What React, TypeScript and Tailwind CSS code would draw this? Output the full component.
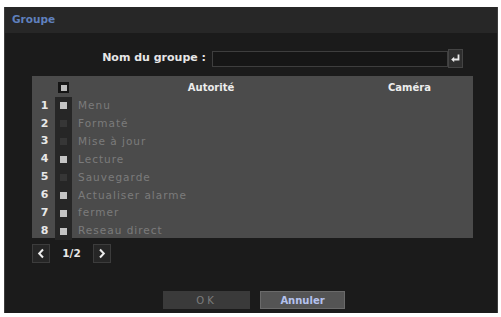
const font = { fontFamily: '"DejaVu Sans", Verdana, sans-serif' }

const rows = [
  { n: 1, label: 'Menu', on: true },
  { n: 2, label: 'Formaté', on: false },
  { n: 3, label: 'Mise à jour', on: false },
  { n: 4, label: 'Lecture', on: true },
  { n: 5, label: 'Sauvegarde', on: false },
  { n: 6, label: 'Actualiser alarme', on: true },
  { n: 7, label: 'fermer', on: true },
  { n: 8, label: 'Reseau direct', on: true },
]

const EnterIcon = () => (
  <svg width="11" height="11" viewBox="0 0 11 11">
    <path d="M8.5 1.5 V6.5 H3" stroke="#e8e8e8" strokeWidth="1.8" fill="none" />
    <path d="M1.2 6.5 L4.2 3.8 V9.2 Z" fill="#e8e8e8" />
  </svg>
)

const Chevron = ({ dir }: { dir: 'l' | 'r' }) => (
  <svg width="8" height="11" viewBox="0 0 8 11">
    <path
      d={dir === 'l' ? 'M6 1.5 L2.2 5.5 L6 9.5' : 'M2 1.5 L5.8 5.5 L2 9.5'}
      stroke="#ececec"
      strokeWidth="2"
      fill="none"
    />
  </svg>
)

export default function App() {
  return (
    <div className="w-[501px] h-[317px] bg-white pl-[4px] pt-[7px] overflow-hidden" style={font}>
      <div className="w-[494px] h-[306px] bg-[#1b1b1b] border-x border-[#3d3d3d] flex flex-col">
        {/* title */}
        <div className="h-[26px] bg-[#272727] flex items-center pl-[7px]">
          <span className="text-[10.5px] font-bold text-[#5f80bd]">Groupe</span>
        </div>

        {/* nom du groupe */}
        <div className="flex items-center mt-[16px] h-[19px]">
          <div className="w-[207px] text-right pr-[6px] text-[11px] font-bold text-[#e6e6e6]">Nom du groupe :</div>
          <div className="w-[236px] h-[16px] border border-[#3e3e3e] bg-[#161616]" />
          <div className="w-[15px] h-[19px] bg-[#2e2e2e] border border-[#444] flex items-center justify-center">
            <EnterIcon />
          </div>
        </div>

        {/* table */}
        <div className="ml-[27px] mt-[8px] w-[441px] h-[162px] bg-[#4b4b4b]">
          <div className="flex items-center h-[21px] pt-[2px]">
            <div className="w-[23px]" />
            <div className="w-[17px] flex justify-center">
              <div className="w-[11px] h-[11px] bg-[#151515] flex items-center justify-center">
                <div className="w-[6px] h-[6px] bg-[#bdbdbd]" />
              </div>
            </div>
            <div className="w-[278px] text-center text-[10px] font-bold text-[#ededed]">Autorité</div>
            <div className="ml-[38px] text-[10px] font-bold text-[#ededed]">Caméra</div>
          </div>
          <div className="flex flex-col">
            {rows.map((r) => (
              <div key={r.n} className="flex items-center h-[17.9px]">
                <div className="w-[23px] text-center text-[11px] font-bold text-[#e8e8e8] pl-[2px]">{r.n}</div>
                <div className="w-[17px] h-full bg-[#262626] flex items-center justify-center">
                  <div className={r.on ? 'w-[7px] h-[7px] bg-[#c4c4c4]' : 'w-[7px] h-[7px] bg-[#363636]'} />
                </div>
                <div className="pl-[6px] text-[10.5px] tracking-[1px] text-[#7b7b7b]">{r.label}</div>
              </div>
            ))}
          </div>
        </div>

        {/* pagination */}
        <div className="flex items-center ml-[27px] mt-[6px] h-[19px]">
          <div className="w-[18px] h-[19px] bg-[#262626] border border-[#3c3c3c] flex items-center justify-center">
            <Chevron dir="l" />
          </div>
          <div className="w-[43px] text-center text-[10.5px] font-bold text-[#e8e8e8]">1/2</div>
          <div className="w-[18px] h-[19px] bg-[#262626] border border-[#3c3c3c] flex items-center justify-center">
            <Chevron dir="r" />
          </div>
        </div>

        {/* buttons */}
        <div className="flex mt-[28px] ml-[158px] gap-[10px]">
          <div className="w-[87px] h-[18px] bg-[#3a3a3a] flex items-center justify-center text-[10px] tracking-[3px] text-[#7c7c7c]">OK</div>
          <div className="w-[85px] h-[18px] bg-[#545454] border border-[#6a6a6a] flex items-center justify-center text-[10px] font-bold text-[#b4c2ee]">Annuler</div>
        </div>
      </div>
    </div>
  )
}
